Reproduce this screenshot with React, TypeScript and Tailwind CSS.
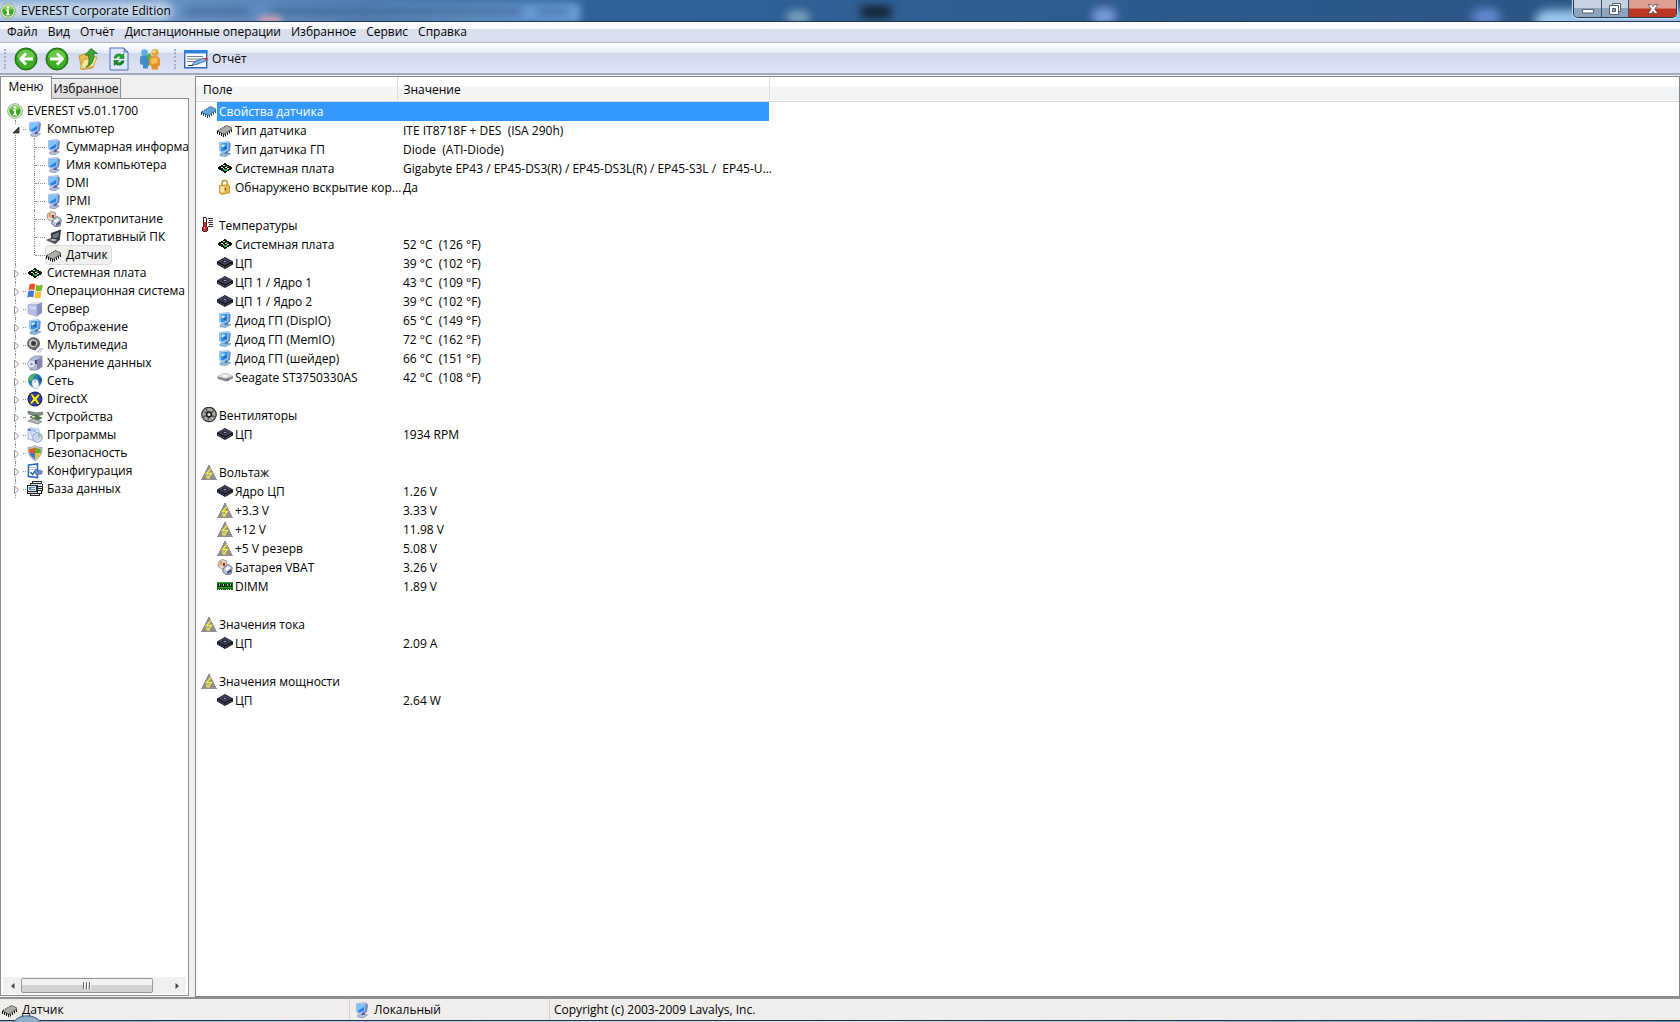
import { useState, type ReactNode } from "react";

type IconName =
  | "info" | "computer" | "display" | "power" | "laptop" | "chip" | "chipBlue"
  | "board" | "windows" | "server" | "speaker" | "storage" | "network"
  | "directx" | "devices" | "programs" | "shield" | "config" | "database"
  | "lock" | "thermo" | "cpu" | "drive" | "fan" | "volt" | "dimm";

function Chip({ top, side, line }: { top: string; side: string; line: string }) {
  return (
    <>
      <path d="M1 8.500 9.500 3.500 15 6 7 11.500z" fill={top} />
      <path d="M1 8.500 7 11.500 15 6v1.500L7 13 1 10z" fill={side} />
      <path d="M1 8.500 9.500 3.500 15 6" fill="none" stroke={line} strokeWidth="1" strokeDasharray="1.200 1" />
      <path d="M.5 8.500V12M2.500 10v3M4.500 11v3M6.500 12v3M8.500 12v2.500M10.500 10.500V13M12.500 9v2.500M14.500 7.500V10" stroke={line} strokeWidth="1" />
    </>
  );
}

function Monitor() {
  return (
    <>
      <path d="M3.500 13.500 9.500 11.500l4 1.500-4.500 2.700-5-.7z" fill="#b9c2e2" stroke="#6d78a8" strokeWidth=".6" />
      <path d="M7.500 10.500 11 9.500v3L8 13.500z" fill="#5560a0" />
      <path d="M11.500.8 14 2.500 13 10l-2.500 1.300z" fill="#7680b8" />
      <path d="M2.500 1.500 11.800.500 11 9.500 4.800 12 2.500 10z" fill="#cddaf6" stroke="#8a9cd0" strokeWidth=".6" />
      <path d="M3.600 2.600 10.800 1.700l-.6 7-5.200 2L3.600 9.500z" fill="#1f86e6" />
      <path d="M3.600 2.600 10.800 1.700l-.2 2.800L4.500 8.500l-.9-.2z" fill="#7cc6fa" />
    </>
  );
}

const drawings: Record<IconName, ReactNode> = {
  info: (
    <>
      <circle cx="8" cy="8" r="7.300" fill="#eef6e6" stroke="#8aa77e" strokeWidth="1" />
      <circle cx="8" cy="8" r="5.800" fill="#43a823" />
      <path d="M3 6a5.300 5.300 0 0 1 10 0c-3 1.500-7 1.500-10 0z" fill="#7fd052" />
      <circle cx="8" cy="4.300" r="1.400" fill="#fff" />
      <path d="M6 6.500h3v4.500h1v1.300H6V11h1V7.800H6z" fill="#fff" />
    </>
  ),
  computer: <Monitor />,
  display: (
    <>
      <path d="M3 13 9 11.500l5 1.200-5.500 2.800L3 14.700z" fill="#8fc0e0" stroke="#5d84a8" strokeWidth=".6" />
      <path d="M7.500 10.500 11 9.500v3L8 13.500z" fill="#4f7aa8" />
      <path d="M11.500.8 13.800 2.500 13 10l-2.500 1.300z" fill="#5f8fc4" />
      <path d="M2.500 1.500 11.800.5 11 9.500 4.800 12 2.500 10z" fill="#c6e2f6" stroke="#6fa2d0" strokeWidth=".6" />
      <path d="M3.600 2.600 10.800 1.700l-.6 7-5.200 2L3.600 9.500z" fill="#2f8fe2" />
      <path d="M4.500 3.500h3.300v2.700H4.500z" fill="#c8f1ff" />
      <path d="M6.500 5.500h3v2.300h-3z" fill="#1e5cae" />
    </>
  ),
  power: (
    <>
      <path d="M1 3.500 5 .5l4.500 1.300.5 4.700L6 10.500 1.500 8z" fill="#e2dbd4" stroke="#8d827c" strokeWidth=".8" />
      <path d="M2.500 1.800h2.500v4.500H2.500z" fill="#dfa45c" />
      <path d="M5.800 3.800h2.400V7H5.800z" fill="#9c3524" />
      <path d="M7 8.500 11.500 5.500l3.800 3L14 15l-5 .5-3.500-3z" fill="#bac4da" stroke="#5d6688" strokeWidth=".9" />
      <path d="M8 9.500 11.500 7 13 9l-3.500 3z" fill="#fff" />
      <path d="M10 13 14 10v2.800L10.500 15z" fill="#465373" />
    </>
  ),
  laptop: (
    <>
      <path d="M5 4.500 14.500 1 13.500 9.500 6 11z" fill="#36393e" stroke="#191b1e" strokeWidth=".7" />
      <path d="M6.500 5.800 12.900 3.300l-.6 5-5.300 1.500z" fill="#6d777f" />
      <path d="M.8 11 6 9l8 1.200-4.800 4.600z" fill="#4c5056" stroke="#222" strokeWidth=".6" />
      <path d="M3 10.900 6.500 9.700l4.500.9L8.700 12.300z" fill="#b7bcc4" />
    </>
  ),
  chip: <Chip top="#aeaea8" side="#66665f" line="#151515" />,
  chipBlue: <Chip top="#5ea3de" side="#3778b4" line="#24486f" />,
  board: (
    <g shapeRendering="crispEdges">
      <path d="M0 8 8 3l8 5-8 5z" fill="#101310" />
      <path d="M4 7h2v1H4zM6 5h2v1H6zM8 7h2v1H8zM10 8h2v1h-2zM6 8h1v1H6z" fill="#d8ded8" />
      <path d="M6 9h5v1H6zM7 10h3v1H7zM9 6h2v1H9z" fill="#26b52c" />
    </g>
  ),
  windows: (
    <>
      <path d="M2.500 1.500C4.500 0 6.500.3 8.300 1.300L7.400 7.200C5.500 6.300 3.600 6.200 1.500 7.400z" fill="#e8562a" />
      <path d="M9.200 1.800c2 1 4 1 6.600 0l-1.100 5.900c-2.300 1.100-4.300 1-6.300.1z" fill="#79b92c" />
      <path d="M1.300 8.300C3.300 7.100 5.300 7.200 7.200 8.100L6.300 14.500C4.500 13.500 2.500 13.500.2 14.700z" fill="#3c77d2" />
      <path d="M8.200 8.500c1.900.9 3.900 1 6.300-.1l-1.100 6.200c-2.200 1.100-4.300 1-6.100.1z" fill="#f5c02c" />
    </>
  ),
  server: (
    <>
      <path d="M10 3 15 1v11l-5 3.500z" fill="#8a8fc4" />
      <path d="M1 3.500 7 .8 15 1l-5 2.500z" fill="#dfe2f8" />
      <path d="M1 3.500h9v12L1 12.500z" fill="#b6bbe4" stroke="#969cca" strokeWidth=".5" />
      <path d="M2 5.500 9 6.500M2 7l7 1" stroke="#e9ebfb" strokeWidth=".8" />
    </>
  ),
  speaker: (
    <>
      <ellipse cx="6.500" cy="6.500" rx="6" ry="5.800" fill="#6d6d70" stroke="#434346" strokeWidth=".8" />
      <ellipse cx="6" cy="6.200" rx="4.300" ry="4" fill="#c3c3c6" />
      <ellipse cx="6.500" cy="6.500" rx="2.500" ry="2.400" fill="#39393d" />
      <path d="M5 12.500 9 11v2.500z" fill="#55555a" />
      <path d="M10 15c2-.5 3-2 3.300-4M12.500 15.500c1.600-1 2.500-2.500 2.700-4.500" fill="none" stroke="#93a4da" strokeWidth="1" />
    </>
  ),
  storage: (
    <>
      <path d="M3 4 8 1h7v11l-5 3H3z" fill="#b8bdd5" stroke="#767c9e" strokeWidth=".7" />
      <path d="M10 4.500 15 1.500v10l-5 3z" fill="#8489ac" />
      <circle cx="4.500" cy="9" r="4" fill="#e3e6f2" stroke="#9299b8" strokeWidth=".7" />
      <circle cx="4.500" cy="9" r="1.200" fill="#7c88c4" />
      <path d="M8 5h2v4H8z" fill="#414e8c" />
    </>
  ),
  network: (
    <>
      <circle cx="8" cy="7.500" r="7" fill="#237fb6" />
      <path d="M2 5C4 1.500 6.500.5 9 .700 8 3 6 3.500 6 6L3 8.500 1 7z" fill="#58b25c" />
      <path d="M11 3l3.500 2v4L12 10z" fill="#1b5b90" />
      <path d="M5 8c2-3 6-2 6.500 1l.8 4-2 2.500H7L5 12z" fill="#f2f5f7" stroke="#8da3b3" strokeWidth=".6" />
      <path d="M8 7v3" stroke="#6f8797" strokeWidth=".8" />
    </>
  ),
  directx: (
    <>
      <circle cx="8" cy="8" r="7.500" fill="#1b2a80" />
      <circle cx="8" cy="8" r="6" fill="#3447a8" />
      <path d="M3 2.500 6 3l2 3 3-3.200 2.500.7-3.300 4.700L13 13l-3 .5L7.800 10 5 13.500l-2.500-1L5.700 8z" fill="#fbe91c" stroke="#121a46" strokeWidth=".7" />
    </>
  ),
  devices: (
    <>
      <path d="M1 2 9 4 15.500 3v2.500L9 7.500 1 4.500z" fill="#84918a" stroke="#4b5751" strokeWidth=".6" />
      <path d="M3 8 8.500 6l6.500 3-5.500 2.500z" fill="#477b4b" stroke="#2c4c31" strokeWidth=".6" />
      <path d="M1 12 6.500 9.500 15 12.500 11 15z" fill="#b5b7b2" stroke="#5a5e59" strokeWidth=".6" />
      <path d="M5 7h3v1.500H5z" fill="#e7e4b8" />
    </>
  ),
  programs: (
    <>
      <path d="M1 1.500 9 3v11l-8-2z" fill="#e5ecfb" stroke="#8d9dcb" strokeWidth=".8" />
      <path d="M1 1.500 9 3v2L1 3.800z" fill="#5183d6" />
      <path d="M3 .5 12 2v7L4 8z" fill="#cfe0f8" fillOpacity=".6" stroke="#8da8da" strokeWidth=".6" />
      <circle cx="10.500" cy="10.500" r="4.800" fill="#cddcf0" stroke="#7c92b8" strokeWidth=".8" />
      <path d="M10.500 6a4.500 4.500 0 0 1 4.300 3.500l-3.300.8z" fill="#8ec6a2" />
      <circle cx="10.500" cy="10.500" r="1.300" fill="#fff" stroke="#7c92b8" strokeWidth=".6" />
    </>
  ),
  shield: (
    <>
      <path d="M8 .5C10 2 12.500 2.500 15 2.500c0 6-2 10.500-7 13-5-2.500-7-7-7-13C3.500 2.500 6 2 8 .5z" fill="#c9ced6" stroke="#7e8794" strokeWidth=".7" />
      <path d="M8 2.200V8H2.500C2.200 6.500 2.100 5 2.200 3.800 4.500 3.700 6.300 3.200 8 2.200z" fill="#e25a24" />
      <path d="M8 2.200c1.700 1 3.500 1.500 5.800 1.600.1 1.200 0 2.700-.3 4.200H8z" fill="#64ab2e" />
      <path d="M2.500 8H8v6.200C5.200 12.700 3.300 10.700 2.500 8z" fill="#3f79d4" />
      <path d="M8 8h5.500c-.8 2.700-2.700 4.700-5.500 6.200z" fill="#f3c22e" />
    </>
  ),
  config: (
    <>
      <path d="M1.500 2 10.500 1v13.500l-9-1z" fill="#fff" stroke="#2866c4" strokeWidth="1.600" />
      <path d="M3 4.500h5.500M3 6.500h4" stroke="#a9bede" strokeWidth=".8" />
      <path d="M3.500 9 5.500 11.500 9.500 6" fill="none" stroke="#2f62b3" strokeWidth="1.400" />
      <path d="M8 9.500 13 7l2.500 1.500-1 2.500L9 11.500z" fill="#6f96c2" stroke="#31547f" strokeWidth=".6" />
    </>
  ),
  database: (
    <g shapeRendering="crispEdges">
      <path d="M5 0h10v3h1v7h-1v3h-2v2H3v-2H0V4h3V2h2z" fill="#24262c" />
      <path d="M6 1h8v1H6zM4 3h8v1H4zM1 5h8v5H1zM11 3h4v2h-4zM11 6h4v1h-4zM11 8h4v1h-4zM11 10h3v2h-3z" fill="#e4e7ec" />
      <path d="M2 6h6v3H2z" fill="#5b86c9" />
      <path d="M4 7h4v1H4z" fill="#dfe9fa" />
      <path d="M1 11h9v1H1zM4 13h8v1H4z" fill="#d6d9de" />
    </g>
  ),
  lock: (
    <>
      <path d="M5 7V4.500a2.700 3 0 0 1 5.400 0V7" fill="none" stroke="#c2a452" strokeWidth="1.800" />
      <path d="M2.500 6.500 11 5.800l1.500 1.200v6.800L4.500 15.500l-2-1.500z" fill="#e9bd4c" stroke="#b0842a" strokeWidth=".8" />
      <path d="M3.300 7.500h4v5.800L3.300 13z" fill="#fae6a0" />
      <path d="M8.500 9v2.500" stroke="#7b5713" strokeWidth="1.200" />
    </>
  ),
  thermo: (
    <g shapeRendering="crispEdges">
      <path d="M2 0h3v1h1v9h1v4H6v1H2v-1H1v-4h1z" fill="#3b1d1d" />
      <path d="M3 1h2v9H3z" fill="#fff" />
      <path d="M3 5h2v5h1v4H2v-4h1z" fill="#d92a2a" />
      <path d="M3 10h1v2H3z" fill="#ffb4b4" />
      <path d="M7 1h5v1H7zM8 3h4v1H8zM7 5h5v1H7zM8 7h4v1H8zM7 9h5v1H7z" fill="#333" />
    </g>
  ),
  cpu: (
    <>
      <path d="M0 6.500 8 2l8 4.500v3L8 14 0 9.500z" fill="#15151f" />
      <path d="M1 6.500 8 2.700l7 3.800-7 3.800z" fill="#43455f" />
      <path d="M4.500 6.500 8 4.700l3.500 1.800L8 8.300z" fill="#0f0f18" />
      <path d="M6 6.500 8 5.500l2 1-2 1z" fill="#9496b0" />
      <path d="M1 8.700 8 12.400l7-3.700" fill="none" stroke="#85879f" strokeWidth="1" strokeDasharray="1 1" />
    </>
  ),
  drive: (
    <>
      <path d="M0 7.500 6 4.500h5l5 2.500v2.500l-7 3L1 10z" fill="#8b8b8b" />
      <path d="M0 7.500 6 4.500h5l5 2.500-7 2.500z" fill="#dadada" />
      <ellipse cx="8" cy="6.800" rx="3" ry="1.200" fill="#f8f8f8" />
      <path d="M10 10.500h2v1h-2z" fill="#444" />
    </>
  ),
  fan: (
    <>
      <circle cx="8" cy="7.500" r="7.200" fill="#a8a8a8" stroke="#2d2d2d" strokeWidth="1.200" />
      <path d="M8 7.500 5 2M8 7.500l5-4M8 7.500l6 2.500M8 7.500l-1 6M8 7.500 2 10M8 7.500 2.500 4.500" stroke="#5b5b5b" strokeWidth="1.400" />
      <circle cx="8" cy="7.500" r="3.200" fill="#1e1e1e" />
      <circle cx="8" cy="7.500" r="1.600" fill="#e9e9e9" />
    </>
  ),
  volt: (
    <>
      <path d="M8 0 16 16H0z" fill="#8f8f8f" shapeRendering="crispEdges" />
      <path d="M10 4.500 5.500 9.500h5L7 13.500" fill="none" stroke="#f3f03e" strokeWidth="1.300" />
      <path d="M6 11v3h3" fill="none" stroke="#f3f03e" strokeWidth="1.200" />
    </>
  ),
  dimm: (
    <g shapeRendering="crispEdges">
      <path d="M0 4h16v8H0z" fill="#15651d" />
      <path d="M0 4h16v1H0zM1 9h14v1H1z" fill="#2ea336" />
      <path d="M1 6h3v3H1zM5 6h3v3H5zM9 6h2v3H9zM12 6h3v3h-3z" fill="#0b1a0c" />
      <path d="M2 6h1v2H2zM6 6h1v2H6zM10 6h1v2h-1zM13 6h1v2h-1z" fill="#8ae08a" />
      <path d="M1 11h1v1H1zM3 11h1v1H3zM5 11h1v1H5zM9 11h1v1H9zM11 11h1v1h-1zM13 11h1v1h-1z" fill="#d9d34e" />
    </g>
  ),
};

function Icon({ name }: { name: IconName }) {
  return (
    <svg viewBox="0 0 16 16" className="size-4 shrink-0" aria-hidden="true">
      {drawings[name]}
    </svg>
  );
}

function RoundArrow({ flip }: { flip?: boolean }) {
  return (
    <svg viewBox="0 0 24 24" className="size-6" aria-hidden="true">
      <circle cx="12" cy="12" r="11" fill="#2b8f1b" stroke="#1f6d14" strokeWidth="1" />
      <circle cx="12" cy="12" r="9.500" fill="#3fae25" />
      <path d="M3 10a9.200 9.200 0 0 1 18 0c-5 2.500-13 2.500-18 0z" fill="#6bc647" />
      <path
        d={flip ? "M5 12h12.500M12 6.500l5.500 5.500-5.500 5.500" : "M19 12H6.500M12 6.500 6.500 12l5.500 5.500"}
        fill="none"
        stroke="#fff"
        strokeWidth="2.800"
        strokeLinejoin="round"
      />
    </svg>
  );
}

function FolderUp() {
  return (
    <svg viewBox="0 0 24 24" className="size-6" aria-hidden="true">
      <path d="M3 9 9 6.500l2 1.500 8 1-2 12-11 1.500z" fill="#e7bd4b" stroke="#b78b25" strokeWidth=".8" />
      <path d="M4 22 8 12.500 21 10l-3.500 9.500z" fill="#fbe59a" stroke="#c49b38" strokeWidth=".8" />
      <path d="M10 20c3-1.500 3.500-5 2.500-12H9L15 1.500l6.500 5H17.500C18.500 13 16 18.500 10 20z" fill="#3fa534" stroke="#23701c" strokeWidth=".8" />
    </svg>
  );
}

function RefreshPage() {
  return (
    <svg viewBox="0 0 24 24" className="size-6" aria-hidden="true">
      <path d="M3 1h14l4 4v18H3z" fill="#dfe9fb" stroke="#4a6bb4" strokeWidth="1" />
      <path d="M17 1v4h4z" fill="#9db8e8" stroke="#4a6bb4" strokeWidth=".8" />
      <path d="M6.500 11.500C7 7 12 5 15.200 7.500L17 5.800l.4 6.200-6-.2 1.900-1.800c-1.600-1.100-3-.3-3.500 1.500z" fill="#2a9a32" />
      <path d="M17.500 13.500c-.5 4.500-5.500 6.500-8.700 4L7 19.200 6.600 13l6 .2L10.700 15c1.600 1.100 3 .3 3.500-1.500z" fill="#1c8428" />
    </svg>
  );
}

function Users() {
  return (
    <svg viewBox="0 0 24 24" className="size-6" aria-hidden="true">
      <path d="M2 10.500C2 9 4 8 6.500 8s5 1 5 3v7l-1.500 1v2.500H5V18l-3-1z" fill="#3d8fc6" />
      <circle cx="6.500" cy="5.500" r="3.300" fill="#5faede" />
      <path d="M8.500 8 12 6l1.500 3.500-3.500 4z" fill="#58ac47" />
      <path d="M11 13c0-2.500 2-4 5.500-4S22 10.500 22 13v5.500l-2 1v3h-6.500V19l-2.500-1z" fill="#dd952b" />
      <path d="M12.500 13c1-2 5-3 7-1.500v4l-6 2z" fill="#f5bd58" />
      <circle cx="17" cy="5.500" r="3.600" fill="#e9a63c" />
      <circle cx="16" cy="4.500" r="1.600" fill="#fbd98e" />
    </svg>
  );
}

function ReportIcon() {
  return (
    <svg viewBox="0 0 24 20" className="h-5 w-6" aria-hidden="true">
      <path d="M.7 1.700h22v17H.7z" fill="#fff" stroke="#2b68bd" strokeWidth="1.400" />
      <path d="M0 1h23.400v3.500H0z" fill="#2f7fdf" />
      <path d="M3 7.500h16M3 10h14M3 12.500h11" stroke="#77808c" strokeWidth="1" />
      <path d="M8 16 10.500 12.500 20 9l2.500 2.500-10 4z" fill="#7fb6ee" stroke="#315a94" strokeWidth=".8" />
      <path d="M20 9l3-.5 1 2-1.500 1.300z" fill="#d93124" />
      <path d="M4 16.500h5" stroke="#333" strokeWidth="1" />
    </svg>
  );
}

const menuItems = ["Файл", "Вид", "Отчёт", "Дистанционные операции", "Избранное", "Сервис", "Справка"];

const computerItems: { icon: IconName; label: string }[] = [
  { icon: "computer", label: "Суммарная информация" },
  { icon: "computer", label: "Имя компьютера" },
  { icon: "computer", label: "DMI" },
  { icon: "computer", label: "IPMI" },
  { icon: "power", label: "Электропитание" },
  { icon: "laptop", label: "Портативный ПК" },
  { icon: "chip", label: "Датчик" },
];

const categories: { icon: IconName; label: string }[] = [
  { icon: "board", label: "Системная плата" },
  { icon: "windows", label: "Операционная система" },
  { icon: "server", label: "Сервер" },
  { icon: "display", label: "Отображение" },
  { icon: "speaker", label: "Мультимедиа" },
  { icon: "storage", label: "Хранение данных" },
  { icon: "network", label: "Сеть" },
  { icon: "directx", label: "DirectX" },
  { icon: "devices", label: "Устройства" },
  { icon: "programs", label: "Программы" },
  { icon: "shield", label: "Безопасность" },
  { icon: "config", label: "Конфигурация" },
  { icon: "database", label: "База данных" },
];

type Reading = { icon: IconName; field: string; value: string };

const groups: { icon: IconName; title: string; rows: Reading[] }[] = [
  {
    icon: "chipBlue",
    title: "Свойства датчика",
    rows: [
      { icon: "chip", field: "Тип датчика", value: "ITE IT8718F + DES  (ISA 290h)" },
      { icon: "display", field: "Тип датчика ГП", value: "Diode  (ATI-Diode)" },
      { icon: "board", field: "Системная плата", value: "Gigabyte EP43 / EP45-DS3(R) / EP45-DS3L(R) / EP45-S3L /  EP45-U..." },
      { icon: "lock", field: "Обнаружено вскрытие кор...", value: "Да" },
    ],
  },
  {
    icon: "thermo",
    title: "Температуры",
    rows: [
      { icon: "board", field: "Системная плата", value: "52 °C  (126 °F)" },
      { icon: "cpu", field: "ЦП", value: "39 °C  (102 °F)" },
      { icon: "cpu", field: "ЦП 1 / Ядро 1", value: "43 °C  (109 °F)" },
      { icon: "cpu", field: "ЦП 1 / Ядро 2", value: "39 °C  (102 °F)" },
      { icon: "display", field: "Диод ГП (DispIO)", value: "65 °C  (149 °F)" },
      { icon: "display", field: "Диод ГП (MemIO)", value: "72 °C  (162 °F)" },
      { icon: "display", field: "Диод ГП (шейдер)", value: "66 °C  (151 °F)" },
      { icon: "drive", field: "Seagate ST3750330AS", value: "42 °C  (108 °F)" },
    ],
  },
  {
    icon: "fan",
    title: "Вентиляторы",
    rows: [{ icon: "cpu", field: "ЦП", value: "1934 RPM" }],
  },
  {
    icon: "volt",
    title: "Вольтаж",
    rows: [
      { icon: "cpu", field: "Ядро ЦП", value: "1.26 V" },
      { icon: "volt", field: "+3.3 V", value: "3.33 V" },
      { icon: "volt", field: "+12 V", value: "11.98 V" },
      { icon: "volt", field: "+5 V резерв", value: "5.08 V" },
      { icon: "power", field: "Батарея VBAT", value: "3.26 V" },
      { icon: "dimm", field: "DIMM", value: "1.89 V" },
    ],
  },
  {
    icon: "volt",
    title: "Значения тока",
    rows: [{ icon: "cpu", field: "ЦП", value: "2.09 A" }],
  },
  {
    icon: "volt",
    title: "Значения мощности",
    rows: [{ icon: "cpu", field: "ЦП", value: "2.64 W" }],
  },
];

function TitleBar() {
  return (
    <header className="relative flex h-[22px] shrink-0 items-start justify-between overflow-hidden border-b border-[#25354f] bg-[#8fb3dd]">
      {/* things behind the glass */}
      <div className="absolute inset-0 bg-linear-to-r from-[#7ba2d0] via-[#2f6199] to-[#2a5584] via-35%" />
      <div className="absolute left-[150px] top-[3px] h-5 w-[430px] bg-linear-to-r from-[#6c96c8] via-[#5483bb] to-[#6fa3dc] blur-[4px]" />
      <div className="absolute left-[185px] top-[8px] h-[7px] w-[64px] bg-[#456a99] blur-[4px]" />
      <div className="absolute left-[272px] top-[8px] h-[7px] w-[250px] bg-[#456a99] blur-[4px]" />
      <div className="absolute left-[537px] top-[8px] h-[7px] w-[32px] bg-[#4a74a8] blur-[4px]" />
      <div className="absolute left-[258px] top-[16px] h-2 w-6 rounded-full bg-[#d6a3b4] blur-[3px]" />
      <div className="absolute left-[786px] top-[11px] h-3 w-6 rounded-full bg-[#7ea5bd] blur-[4px]" />
      <div className="absolute left-[860px] top-[6px] h-3 w-8 rounded-full bg-[#14202f] blur-[4px]" />
      <div className="absolute left-[1092px] top-[8px] h-4 w-6 rounded-full bg-[#7f9ee0] blur-[5px]" />
      <div className="absolute left-[1472px] top-[9px] h-4 w-7 rounded-full bg-[#6589d2] blur-[5px]" />
      <div className="absolute left-[1535px] top-[10px] h-6 w-40 rounded-full bg-[#9cc6ec] blur-[5px]" />
      <div className="absolute -left-4 top-[2px] h-[18px] w-[188px] rounded-full bg-[#c8d9ed] blur-[5px]" />
      <div className="relative flex h-[21px] items-center gap-[5px]">
        <Icon name="info" />
        <h1>EVEREST Corporate Edition</h1>
      </div>
      <div className="relative mr-[3px] flex h-[18px] overflow-hidden rounded-b-[5px] border border-t-0 border-[#26374d] shadow-[0_0_1px_1px_#c9dcf0]">
        <button aria-label="Свернуть" className="flex w-7 items-center justify-center border-r border-[#3a4d66] bg-linear-to-b from-[#c6d1df] from-50% to-[#8fa5bf] to-50%">
          <svg viewBox="0 0 12 12" className="size-3"><path d="M.5 6.500h11v3.500H.5z" fill="#fff" stroke="#535f70" /></svg>
        </button>
        <button aria-label="Восстановить" className="flex w-[27px] items-center justify-center border-r border-[#3a4d66] bg-linear-to-b from-[#c6d1df] from-50% to-[#8fa5bf] to-50%">
          <svg viewBox="0 0 12 12" className="size-3">
            <path d="M3.500.5h8v8h-8z" fill="#fff" stroke="#535f70" />
            <path d="M.5 2.500h9v9h-9z" fill="#fff" stroke="#535f70" />
            <path d="M3.500 5.500h3v3h-3z" fill="#8fa5bf" stroke="#535f70" />
          </svg>
        </button>
        <button aria-label="Закрыть" className="flex w-[47px] items-center justify-center bg-linear-to-b from-[#dd9f92] from-45% to-[#bb3722] to-55%">
          <svg viewBox="0 0 12 12" className="size-3">
            <path d="M1 1.500h3.200L6 3.600l1.800-2.100H11L7.800 6l3.200 4.500H7.800L6 8.400l-1.800 2.100H1L4.200 6z" fill="#fff" stroke="#5c4448" strokeWidth=".8" />
          </svg>
        </button>
      </div>
    </header>
  );
}

function Grip() {
  return <span className="my-1 w-0 self-stretch border-l-2 border-dotted border-[#a9adc0]" />;
}

function Toolbar() {
  return (
    <div className="flex h-8 shrink-0 items-center border-b-2 border-[#a4a8b8] bg-linear-to-b from-white from-5% via-[#e4ebf6] via-33% to-[#e4ebf6]">
      <div className="flex h-full flex-1 items-center bg-linear-to-b from-transparent from-33% via-[#d2d8ec] via-33% to-[#dfe3f4] pl-1 pt-[2px]">
        <Grip />
        <div className="flex items-center gap-[7px] pl-2">
          <button aria-label="Назад"><RoundArrow /></button>
          <button aria-label="Вперёд"><RoundArrow flip /></button>
          <button aria-label="Вверх"><FolderUp /></button>
          <button aria-label="Обновить"><RefreshPage /></button>
          <button aria-label="Пользователи"><Users /></button>
        </div>
        <span className="w-3" />
        <Grip />
        <button className="flex items-center gap-1 pl-2">
          <ReportIcon />
          Отчёт
        </button>
      </div>
    </div>
  );
}

function TreeItem({ icon, label, selected, onSelect }: { icon: IconName; label: string; selected?: boolean; onSelect?: () => void }) {
  return (
    <button
      onClick={onSelect}
      className={
        selected
          ? "flex h-[18px] items-center gap-1 whitespace-nowrap rounded-[3px] bg-[#f0f0f0] pr-[3px] outline outline-[#dadada]"
          : "flex h-[18px] items-center gap-1 whitespace-nowrap pr-[3px]"
      }
    >
      <Icon name={icon} />
      {label}
    </button>
  );
}

function Expander({ open }: { open?: boolean }) {
  return (
    <button aria-label={open ? "Свернуть" : "Развернуть"} className="absolute -left-1 top-[5px] bg-white">
      <svg viewBox="0 0 8 10" className="h-[10px] w-2">
        {open ? (
          <path d="M7 2v6H1z" fill="#404040" stroke="#262626" strokeWidth=".8" />
        ) : (
          <path d="M2.500 1v8L6.500 5z" fill="#fff" stroke="#8f8f8f" />
        )}
      </svg>
    </button>
  );
}

function Tree() {
  const [selected, setSelected] = useState("Датчик");
  return (
    <div className="min-h-0 flex-1 overflow-hidden pl-[6px] pt-[3px]">
      <TreeItem icon="info" label="EVEREST v5.01.1700" />
      <ul className="ml-2">
        <li className="relative border-l border-dotted border-[#8c8c8c]">
          <Expander open />
          <div className="flex items-center">
            <span className="ml-[7px] mr-px w-[3px] border-t border-dotted border-[#8c8c8c]" />
            <TreeItem icon="computer" label="Компьютер" />
          </div>
          <ul className="ml-[18px]">
            {computerItems.map(({ icon, label }, i) => (
              <li key={label} className="flex items-center">
                <span
                  className={
                    i === computerItems.length - 1
                      ? "h-[9px] self-start border-l border-dotted border-[#8c8c8c]"
                      : "h-[18px] border-l border-dotted border-[#8c8c8c]"
                  }
                />
                <span className="mr-px w-[10px] shrink-0 border-t border-dotted border-[#8c8c8c]" />
                <TreeItem icon={icon} label={label} selected={selected === label} onSelect={() => setSelected(label)} />
              </li>
            ))}
          </ul>
        </li>
        {categories.map(({ icon, label }) => (
          <li key={label} className="relative flex items-center border-l border-dotted border-[#8c8c8c]">
            <Expander />
            <span className="ml-[7px] mr-px w-[3px] border-t border-dotted border-[#8c8c8c]" />
            <TreeItem icon={icon} label={label} />
          </li>
        ))}
      </ul>
    </div>
  );
}

function ScrollBar() {
  return (
    <div className="mx-[2px] mb-px flex h-[17px] shrink-0 items-center bg-[#f0f0f0]">
      <button aria-label="Влево" className="flex w-[18px] justify-center">
        <svg viewBox="0 0 5 8" className="h-2 w-[5px]"><path d="M4.500 1v6L1 4z" fill="#444" /></svg>
      </button>
      <div className="flex flex-1">
        <div className="flex h-[15px] w-9/10 items-center justify-center gap-px rounded-[2px] border border-[#989898] bg-linear-to-b from-[#f2f2f2] from-45% to-[#d2d2d4] to-50%">
          <span className="h-[7px] w-[2px] border-r border-white bg-[#666]" />
          <span className="h-[7px] w-[2px] border-r border-white bg-[#666]" />
          <span className="h-[7px] w-[2px] border-r border-white bg-[#666]" />
        </div>
      </div>
      <button aria-label="Вправо" className="flex w-[18px] justify-center">
        <svg viewBox="0 0 5 8" className="h-2 w-[5px]"><path d="M.5 1v6L4 4z" fill="#444" /></svg>
      </button>
    </div>
  );
}

function Sidebar() {
  return (
    <aside className="flex w-[189px] shrink-0 flex-col pb-px">
      <div role="tablist" className="flex h-[22px] shrink-0 items-end">
        <button role="tab" aria-selected="true" className="z-10 -mb-px h-[23px] w-[52px] border border-b-0 border-[#8b8e96] bg-white pb-[2px]">
          Меню
        </button>
        <button role="tab" aria-selected="false" className="h-5 w-[69px] border border-b-0 border-l-0 border-[#8b8e96] bg-linear-to-b from-[#f0f0f0] to-[#d9d9d9]">
          Избранное
        </button>
      </div>
      <div className="flex min-h-0 flex-1 flex-col border border-[#8b8e96] bg-white">
        <Tree />
        <ScrollBar />
      </div>
    </aside>
  );
}

function ReadingsTable() {
  return (
    <main className="min-w-0 flex-1 overflow-hidden border border-[#828790] bg-white">
      <table className="w-full table-fixed border-collapse text-left">
        <colgroup>
          <col className="w-[201px]" />
          <col className="w-[372px]" />
          <col />
        </colgroup>
        <thead>
          <tr className="h-6 border-b border-[#d5d5d5] bg-linear-to-b from-white from-40% to-[#f3f4f6] to-45%">
            <th className="border-r border-[#dedfe1] p-0 pl-[7px] pt-[2px] font-normal">Поле</th>
            <th className="border-r border-[#dedfe1] p-0 pl-[6px] pt-[2px] font-normal">Значение</th>
            <th aria-label="Пусто" />
          </tr>
        </thead>
        {groups.map((group, i) => (
          <tbody key={group.title}>
            {i > 0 && <tr className="h-[19px]"><td colSpan={3} /></tr>}
            <tr className="h-[19px]">
              <th colSpan={2} className="p-0 pl-[5px] font-normal">
                <div className="flex items-center">
                  <Icon name={group.icon} />
                  <span className={i === 0 ? "h-[19px] flex-1 bg-[#3399ff] pl-[2px] leading-[19px] text-white" : "h-[19px] flex-1 pl-[2px] leading-[19px]"}>
                    {group.title}
                  </span>
                </div>
              </th>
              <td />
            </tr>
            {group.rows.map((row) => (
              <tr key={row.field} className="h-[19px]">
                <td className="p-0 pl-[21px]">
                  <div className="flex h-[19px] items-center gap-[2px] whitespace-nowrap leading-[19px]">
                    <Icon name={row.icon} />
                    {row.field}
                  </div>
                </td>
                <td className="whitespace-pre p-0 pl-[6px] leading-[19px]">{row.value}</td>
                <td />
              </tr>
            ))}
          </tbody>
        ))}
      </table>
    </main>
  );
}

function StatusBar() {
  return (
    <footer className="flex h-[21px] shrink-0 items-center bg-[#f0eded]">
      <div className="flex w-[350px] items-center gap-1 self-stretch border-r border-[#d5d1d1] pl-[2px]">
        <Icon name="chip" />
        Датчик
      </div>
      <div className="flex w-[200px] items-center gap-1 self-stretch border-r border-[#d5d1d1] pl-1">
        <Icon name="computer" />
        Локальный
      </div>
      <p className="pl-1">Copyright (c) 2003-2009 Lavalys, Inc.</p>
    </footer>
  );
}

export default function App() {
  return (
    <div className="flex h-screen flex-col overflow-hidden bg-[#f0f0f0] font-['Open_Sans','Noto_Sans',sans-serif] text-[12px] leading-4 text-black">
      <TitleBar />
      <nav className="flex h-[21px] shrink-0 items-center border-b border-[#b4b6c4] bg-linear-to-b from-[#fafbfe] from-35% to-[#dbe0f1] to-35% pl-[7px]">
        <ul className="flex gap-[10px]">
          {menuItems.map((item) => (
            <li key={item}><button>{item}</button></li>
          ))}
        </ul>
      </nav>
      <Toolbar />
      <div className="flex min-h-0 flex-1 gap-[6px] border-b-2 border-[#8f8f93] pt-px">
        <Sidebar />
        <ReadingsTable />
      </div>
      <StatusBar />
      {/* top edge of the taskbar with the start orb poking out */}
      <div className="relative h-[2px] shrink-0 border-t border-[#1f3347] bg-linear-to-r from-[#8db4d6] via-[#d7e4f0] to-[#5d8cb5]">
        <svg viewBox="0 0 28 8" className="absolute -top-[6px] left-[13px] h-2 w-7" aria-hidden="true">
          <path d="M0 8C5-1.500 23-1.500 28 8z" fill="#8fb0c8" stroke="#2f5878" />
        </svg>
      </div>
    </div>
  );
}
